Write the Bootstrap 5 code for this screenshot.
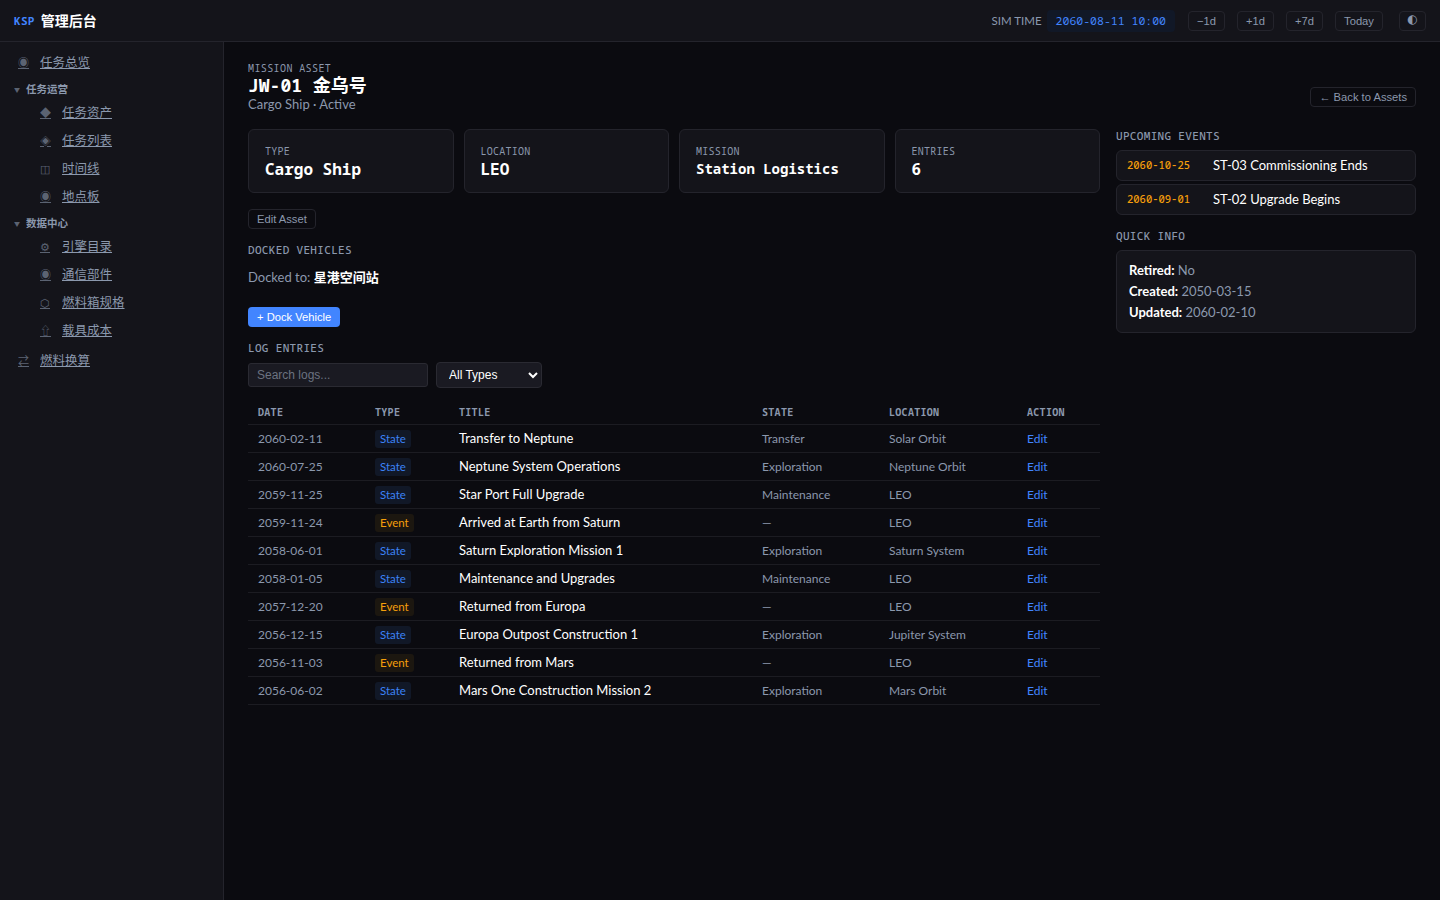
<!doctype html>
<html lang="zh" data-bs-theme="dark">
<head>
<meta charset="utf-8">
<title>KSP</title>
<link href="https://cdn.jsdelivr.net/npm/bootstrap@5.3.0/dist/css/bootstrap.min.css" rel="stylesheet">
<style>
:root{--mono:"Noto Sans Mono","Noto Sans CJK SC",monospace;--ui:Lato,"Noto Sans CJK SC",sans-serif;--arial:"Liberation Sans",sans-serif;--dim:#8b98ad;--line:#24242c;--panel:#14141a;--blue:#4285ff;}
html,body{height:100%}
body{background:#0b0b10;color:#fff;font-family:var(--ui);font-size:13px;line-height:21px;}
.shell{height:100vh;display:flex;flex-direction:column}
.topstrip{height:42px;background:var(--panel);border-bottom:1px solid var(--line);padding:0 14px;flex:none}
.brand-ksp{font-family:var(--mono);font-weight:700;font-size:11px;color:var(--blue);letter-spacing:.3px}
.brand-name{font-size:14px;font-weight:700;margin-left:6px}
.sim-label{font-size:11.5px;color:var(--dim);margin-right:5px}
.sim-value{font-family:var(--mono);font-size:11.5px;color:var(--blue);background:#111827;border-radius:4px;padding:1px 9px;height:22px;line-height:20px;margin-right:13px}
.tool-btn{font-family:var(--arial);font-size:11.2px;line-height:18px;padding:0;height:20px;border:1px solid var(--line);border-radius:4px;background:transparent;color:var(--dim);margin-right:12px;width:37px}
.tool-btn.wide{width:48px;margin-right:16px}
.tool-btn.last{width:27px;margin:0;font-family:"DejaVu Sans",sans-serif;font-size:12px;line-height:14px;padding-bottom:4px}
.side-col{width:224px;background:var(--panel);border-right:1px solid var(--line);flex:none;padding:6px 0}
.side-link{display:flex;align-items:center;height:28px;color:var(--dim);font-size:12.5px;text-decoration:underline}
.side-link.l1{padding-left:18px}
.side-link.l2{padding-left:40px}
.side-ico{display:inline-block;width:22px;font-size:11px;text-align:left;opacity:.6}
.side-group{font-size:10.5px;font-weight:700;color:var(--dim);height:18px;line-height:18px;padding-left:14px;margin-top:4px}
.side-group .tri{font-size:6px;margin-right:6px;vertical-align:1px;opacity:.6}
.last-link{margin-top:2px}
.main-col{flex:1;padding:20px 24px;min-width:0}
.kicker{font-family:var(--mono);font-size:10px;line-height:13px;color:var(--dim);letter-spacing:.4px}
.page-name{font-family:var(--mono);font-size:18px;font-weight:700;line-height:21px;margin:0}
.page-sub{color:var(--dim);line-height:16px}
.back-btn,.edit-btn{font-family:var(--arial);font-size:11.2px;line-height:18px;padding:0 8px;height:20px;border:1px solid var(--line);border-radius:4px;background:transparent;color:var(--dim)}
.back-btn{margin-bottom:5px}
.stat-grid{display:grid;grid-template-columns:repeat(4,1fr);gap:10px;margin-top:17px}
.stat-box{height:64px;background:var(--panel);border:1px solid var(--line);border-radius:6px;padding:15px 16px}
.stat-k{font-family:var(--mono);font-size:10px;line-height:12px;color:var(--dim);letter-spacing:.25px}
.stat-v{font-family:var(--mono);font-size:16px;font-weight:700;line-height:20px;margin-top:2px}
.stat-v.small-v{font-size:14px}
.sec-head{font-family:var(--mono);font-size:11px;font-weight:500;letter-spacing:.33px;color:var(--dim);line-height:14px;margin:0}
.dock-btn{font-family:var(--arial);font-size:11.2px;line-height:18px;height:20px;padding:0 9px;background:var(--blue);border:0;border-radius:4px;color:#fff}
.log-search{width:180px;height:24px;background:#1a1a22;border:1px solid #2a2a32;border-radius:3px;font-family:var(--arial);font-size:12px;color:#fff;padding:0 8px}
.log-search::placeholder{color:#6b7280}
.log-select{width:106px;height:26px;background-color:#1a1a22;border:1px solid #2a2a32;border-radius:4px;font-family:var(--arial);font-size:12px;color:#fff;padding:0 8px}
.log-table{width:100%;border-collapse:collapse;margin-top:12px;font-size:12px}
.log-table th{font-family:var(--mono);font-size:10px;font-weight:700;color:var(--dim);letter-spacing:.3px;padding:0 10px;height:24px;line-height:12px;border-bottom:1px solid #1c1c22;text-align:left}
.log-table td{height:28px;padding:0 10px;border-bottom:1px solid #1c1c22;color:var(--dim);vertical-align:middle}
.log-table td.t-title{color:#fff;font-size:13px}
.log-table a{color:var(--blue);text-decoration:none}
.tag-state,.tag-event{display:inline-block;font-size:11.5px;line-height:18px;padding:0 5px;border-radius:3px}
.tag-state{color:#3b82f6;background:#111827}
.tag-event{color:#f59e0b;background:#1c1710}
.right-col{width:300px;flex:none}
.evt{display:flex;height:31px;align-items:center;background:var(--panel);border:1px solid var(--line);border-radius:6px;padding:0 10px;margin-bottom:3px}
.evt-date{font-family:var(--mono);font-size:10.5px;font-weight:500;color:#f59e0b;width:86px}
.info-box{background:var(--panel);border:1px solid var(--line);border-radius:6px;padding:9px 12px;color:var(--dim)}
.info-box b{color:#fff}
</style>
</head>
<body>
<div class="shell">
<header class="topstrip d-flex align-items-center">
  <span class="brand-ksp">KSP</span><span class="brand-name">管理后台</span>
  <div class="ms-auto d-flex align-items-center">
    <span class="sim-label">SIM TIME</span><span class="sim-value">2060-08-11 10:00</span>
    <button class="tool-btn">−1d</button><button class="tool-btn">+1d</button><button class="tool-btn">+7d</button><button class="tool-btn wide">Today</button><button class="tool-btn last">◐</button>
  </div>
</header>
<div class="d-flex flex-grow-1" style="min-height:0">
<nav class="side-col">
  <a class="side-link l1" href="#"><span class="side-ico">◉</span>任务总览</a>
  <div class="side-group"><span class="tri">▼</span>任务运营</div>
  <a class="side-link l2" href="#"><span class="side-ico">◆</span>任务资产</a>
  <a class="side-link l2" href="#"><span class="side-ico">◈</span>任务列表</a>
  <a class="side-link l2" href="#"><span class="side-ico">◫</span>时间线</a>
  <a class="side-link l2" href="#"><span class="side-ico">◉</span>地点板</a>
  <div class="side-group"><span class="tri">▼</span>数据中心</div>
  <a class="side-link l2" href="#"><span class="side-ico">⚙</span>引擎目录</a>
  <a class="side-link l2" href="#"><span class="side-ico">◉</span>通信部件</a>
  <a class="side-link l2" href="#"><span class="side-ico">⬡</span>燃料箱规格</a>
  <a class="side-link l2" href="#"><span class="side-ico">⇧</span>载具成本</a>
  <a class="side-link l1 last-link" href="#"><span class="side-ico">⇄</span>燃料换算</a>
</nav>
<main class="main-col d-flex gap-3 flex-column">
  <div class="d-flex align-items-end justify-content-between">
    <div>
      <div class="kicker">MISSION ASSET</div>
      <h1 class="page-name">JW-01 金乌号</h1>
      <div class="page-sub">Cargo Ship · Active</div>
    </div>
    <button class="back-btn">← Back to Assets</button>
  </div>
  <div class="d-flex gap-3" style="margin-top:-16px">
    <div class="flex-grow-1" style="min-width:0">
      <div class="stat-grid">
        <div class="stat-box"><div class="stat-k">TYPE</div><div class="stat-v">Cargo Ship</div></div>
        <div class="stat-box"><div class="stat-k">LOCATION</div><div class="stat-v">LEO</div></div>
        <div class="stat-box"><div class="stat-k">MISSION</div><div class="stat-v small-v">Station Logistics</div></div>
        <div class="stat-box"><div class="stat-k">ENTRIES</div><div class="stat-v">6</div></div>
      </div>
      <button class="edit-btn" style="margin-top:16px">Edit Asset</button>
      <h2 class="sec-head" style="margin-top:14px">DOCKED VEHICLES</h2>
      <div style="margin-top:10px;color:var(--dim)">Docked to: <b class="text-white">星港空间站</b></div>
      <button class="dock-btn" style="margin-top:19px">+ Dock Vehicle</button>
      <h2 class="sec-head" style="margin-top:14px">LOG ENTRIES</h2>
      <div class="d-flex align-items-center gap-2" style="margin-top:7px">
        <input class="log-search" placeholder="Search logs..."><select class="log-select"><option>All Types</option></select>
      </div>
      <table class="log-table">
        <thead><tr><th style="width:117px">DATE</th><th style="width:84px">TYPE</th><th style="width:303px">TITLE</th><th style="width:127px">STATE</th><th style="width:138px">LOCATION</th><th>ACTION</th></tr></thead>
        <tbody>
        <tr><td>2060-02-11</td><td><span class="tag-state">State</span></td><td class="t-title">Transfer to Neptune</td><td>Transfer</td><td>Solar Orbit</td><td><a href="#">Edit</a></td></tr>
        <tr><td>2060-07-25</td><td><span class="tag-state">State</span></td><td class="t-title">Neptune System Operations</td><td>Exploration</td><td>Neptune Orbit</td><td><a href="#">Edit</a></td></tr>
        <tr><td>2059-11-25</td><td><span class="tag-state">State</span></td><td class="t-title">Star Port Full Upgrade</td><td>Maintenance</td><td>LEO</td><td><a href="#">Edit</a></td></tr>
        <tr><td>2059-11-24</td><td><span class="tag-event">Event</span></td><td class="t-title">Arrived at Earth from Saturn</td><td>—</td><td>LEO</td><td><a href="#">Edit</a></td></tr>
        <tr><td>2058-06-01</td><td><span class="tag-state">State</span></td><td class="t-title">Saturn Exploration Mission 1</td><td>Exploration</td><td>Saturn System</td><td><a href="#">Edit</a></td></tr>
        <tr><td>2058-01-05</td><td><span class="tag-state">State</span></td><td class="t-title">Maintenance and Upgrades</td><td>Maintenance</td><td>LEO</td><td><a href="#">Edit</a></td></tr>
        <tr><td>2057-12-20</td><td><span class="tag-event">Event</span></td><td class="t-title">Returned from Europa</td><td>—</td><td>LEO</td><td><a href="#">Edit</a></td></tr>
        <tr><td>2056-12-15</td><td><span class="tag-state">State</span></td><td class="t-title">Europa Outpost Construction 1</td><td>Exploration</td><td>Jupiter System</td><td><a href="#">Edit</a></td></tr>
        <tr><td>2056-11-03</td><td><span class="tag-event">Event</span></td><td class="t-title">Returned from Mars</td><td>—</td><td>LEO</td><td><a href="#">Edit</a></td></tr>
        <tr><td>2056-06-02</td><td><span class="tag-state">State</span></td><td class="t-title">Mars One Construction Mission 2</td><td>Exploration</td><td>Mars Orbit</td><td><a href="#">Edit</a></td></tr>
        </tbody>
      </table>
    </div>
    <aside class="right-col" style="padding-top:17px">
      <h2 class="sec-head">UPCOMING EVENTS</h2>
      <div style="margin-top:7px">
        <div class="evt"><span class="evt-date">2060-10-25</span>ST-03 Commissioning Ends</div>
        <div class="evt"><span class="evt-date">2060-09-01</span>ST-02 Upgrade Begins</div>
      </div>
      <h2 class="sec-head" style="margin-top:14px">QUICK INFO</h2>
      <div class="info-box" style="margin-top:7px">
        <div><b>Retired:</b> No</div><div><b>Created:</b> 2050-03-15</div><div><b>Updated:</b> 2060-02-10</div>
      </div>
    </aside>
  </div>
</main>
</div>
</div>
<script src="https://cdn.jsdelivr.net/npm/bootstrap@5.3.0/dist/js/bootstrap.bundle.min.js"></script>
</body>
</html>
